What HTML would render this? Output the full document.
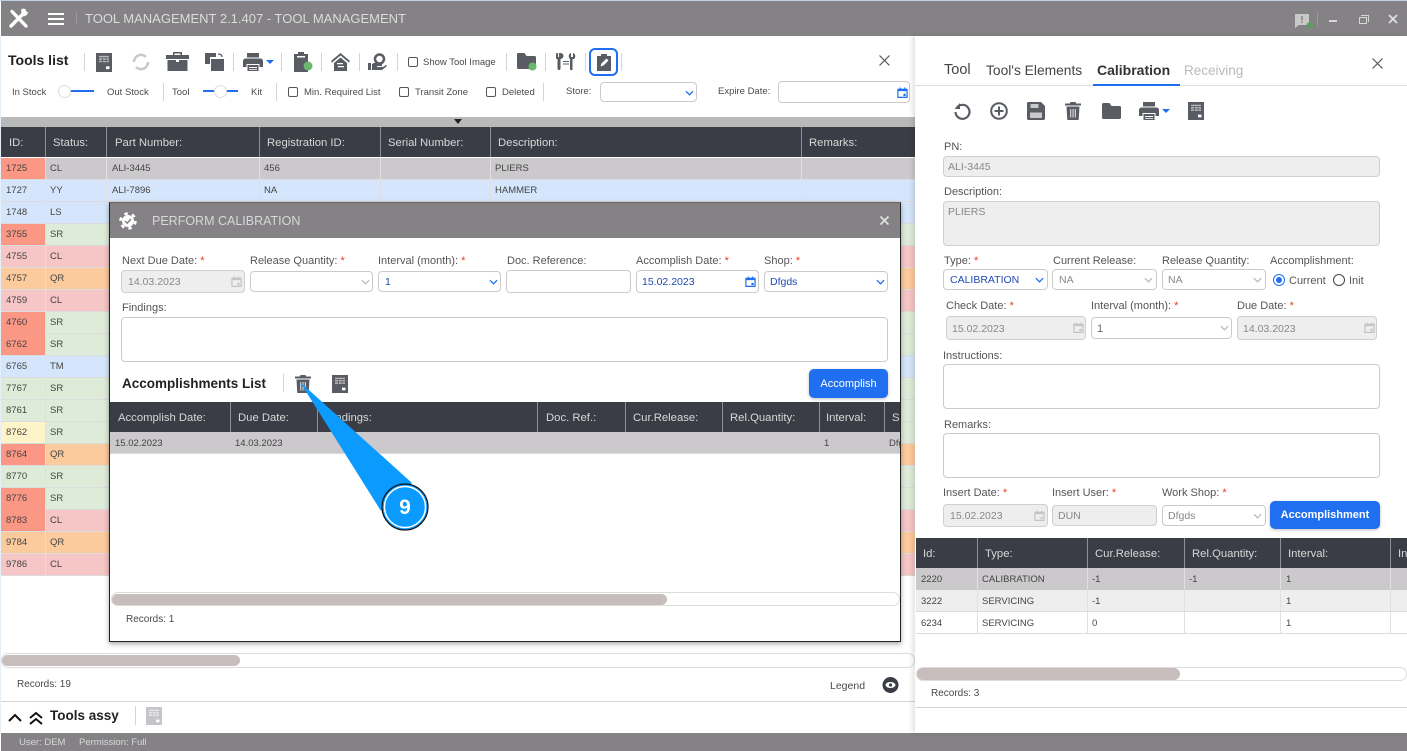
<!DOCTYPE html>
<html><head><meta charset="utf-8"><style>
html,body{margin:0;padding:0;width:1407px;height:751px;overflow:hidden;background:#fff;font-family:"Liberation Sans",sans-serif;color:#444}
div,svg{position:absolute;box-sizing:border-box}
.t{white-space:nowrap;line-height:14px;height:14px;font-size:11px;color:#4a4a4a;margin-top:1px}
.h{white-space:nowrap;line-height:14px;height:14px;font-size:11.3px;color:#d8d8d8;margin-top:1px}
.c{white-space:nowrap;line-height:14px;height:14px;font-size:9.5px;color:#444;margin-top:1px}
.l{white-space:nowrap;line-height:14px;height:14px;font-size:11px;color:#555;margin-top:1px}
.r{color:#f03a17}
.s{background:#d5d3d3;width:1px}
.i{border:1px solid #cfcaca;border-radius:4px;background:#fff}
.d{border:1px solid #d2cece;border-radius:4px;background:#eee}
.v{white-space:nowrap;line-height:14px;height:14px;font-size:10.5px;color:#1f4bb8;margin-top:1px}
.g{white-space:nowrap;line-height:14px;height:14px;font-size:10.5px;color:#888;margin-top:1px}
.cb{width:10px;height:10px;border:1.3px solid #555;border-radius:2px;background:#fff}
.hd{background:#3a3d45;height:30px}
.row{left:0;height:22px;border-bottom:1px solid #dcdcdc}
</style></head><body>
<svg width="0" height="0" style="position:absolute"><defs>
<symbol id="xl" viewBox="0 0 16 20" preserveAspectRatio="none"><path fill="#5a5c63" d="M0 0h16v20H0z"/><path fill="#b9b9bd" d="M3 3h10v1.600H3zM3 5.600h3v1.600H3zM6.800 5.600h3v1.600h-3zM10.400 5.600H13v1.600h-2.600zM3 8.200h3v1.600H3zM6.800 8.200h3v1.600h-3zM10.400 8.200H13v1.600h-2.600z"/><path fill="#fff" d="M10 14h3.500v3H10z"/></symbol>
<symbol id="tr" viewBox="0 0 16 18"><path fill="#5a5c63" d="M5.500 0h5l.7 1.500H16v2H0v-2h4.800zM1.500 4.500h13l-.8 13.500H2.300z"/><path fill="#c9c9cc" d="M5 7h1.300v8.500H5zM7.400 7h1.300v8.500H7.400zM9.700 7H11v8.500H9.700z"/></symbol>
<symbol id="pr" viewBox="0 0 20 18"><path fill="#5a5c63" d="M4 0h12v4.500H4zM2.500 5.500h15A2.500 2.500 0 0 1 20 8v6h-3.500v-3h-13v3H0V8a2.500 2.500 0 0 1 2.500-2.500z"/><path fill="#5a5c63" d="M4.500 12h11v6h-11z"/><path fill="#fff" d="M6 14h8v1H6zM6 16h8v.8H6z"/></symbol>
<symbol id="fo" viewBox="0 0 19 16"><path fill="#5a5c63" d="M1.500 0h6l2 3H17.500A1.500 1.500 0 0 1 19 4.500v10a1.500 1.500 0 0 1-1.500 1.500h-16A1.500 1.500 0 0 1 0 14.500v-13A1.500 1.500 0 0 1 1.500 0z"/></symbol>
<symbol id="ca" viewBox="0 0 12 12"><path fill="none" stroke="currentColor" stroke-width="1.300" d="M1 2.500h10v8.800H1z"/><path fill="currentColor" d="M1 2h10v2.500H1zM3 .5h1.200V3H3zM7.800.5H9V3H7.800zM7 7.500h2.500V10H7z"/></symbol>
<symbol id="ch" viewBox="0 0 10 6"><path fill="none" stroke="currentColor" stroke-width="1.400" d="M1 1l4 4 4-4"/></symbol>
</defs></svg>

<!-- top bar -->
<div style="left:0;top:0;width:1407px;height:1px;background:#bcd3ea"></div>
<div style="left:1px;top:1px;width:1406px;height:35px;background:#848285"></div>
<svg style="left:8px;top:8px" width="21" height="21" viewBox="0 0 21 21"><path fill="none" stroke="#fff" stroke-width="3.400" stroke-linecap="round" d="M3 18L17 4M4 3.500L18 18"/><path fill="#fff" d="M13 1.500a4.500 4.500 0 0 1 5 0L15.500 4.500l1.500 1.500 3-2.500a4.500 4.500 0 0 1-6 4.500z"/></svg>
<div style="left:48px;top:13px;width:16px;height:2px;background:#fff"></div>
<div style="left:48px;top:18px;width:16px;height:2px;background:#fff"></div>
<div style="left:48px;top:23px;width:16px;height:2px;background:#fff"></div>
<div style="left:76px;top:12px;width:1px;height:13px;background:#9a989b"></div>
<div style="left:85px;top:11px;font-size:13px;line-height:16px;color:#dcdcdc;white-space:nowrap">TOOL MANAGEMENT 2.1.407 - TOOL MANAGEMENT</div>
<svg style="left:1294px;top:13px" width="20" height="17" viewBox="0 0 20 17"><path fill="#c9c9c9" d="M1 1h14v11H5l-4 3z"/><path fill="#848285" d="M7.200 3h1.500v4.500H7.200zM7.200 8.500h1.500V10H7.200z"/><circle cx="16" cy="12.500" r="3.500" fill="#5f9a63"/></svg>
<div style="left:1317px;top:12px;width:1px;height:14px;background:#9a989b"></div>
<div style="left:1329px;top:20px;width:8px;height:2px;background:#d8d8d8"></div>
<div style="left:1359px;top:17px;width:8px;height:7px;border:1px solid #d8d8d8"></div>
<div style="left:1361px;top:15px;width:8px;height:7px;border-top:1px solid #d8d8d8;border-right:1px solid #d8d8d8"></div>
<svg style="left:1388px;top:14px" width="10" height="10" viewBox="0 0 10 10"><path stroke="#e0e0e0" stroke-width="1.800" d="M1 1l8 8M9 1l-8 8"/></svg>

<!-- left toolbar -->
<div style="left:0;top:36px;width:1px;height:697px;background:#e6eef7"></div>
<div style="left:8px;top:52px;font-size:14px;font-weight:bold;line-height:16px;color:#222;white-space:nowrap">Tools list</div>
<div class="s" style="left:84px;top:53px;height:18px"></div>
<svg style="left:96px;top:53px" width="16" height="19"><use href="#xl"/></svg>
<svg style="left:131px;top:52px" width="20" height="20" viewBox="0 0 20 20"><path fill="none" stroke="#c9c9c9" stroke-width="2.600" d="M3 10a7 7 0 0 1 12-5M17 10a7 7 0 0 1-12 5"/></svg>
<svg style="left:166px;top:52px" width="23" height="19" viewBox="0 0 23 19"><path fill="#5a5c63" d="M7 0h9v3h-1.500V1.500h-6V3H7zM0 3h23v4H0zM1.500 8H10v2h3V8h8.500v11h-20z"/></svg>
<svg style="left:205px;top:52px" width="20" height="19" viewBox="0 0 20 19"><path fill="#5a5c63" d="M0 1h11v4H5v7H0zM6 7h13v12H6z"/><path fill="none" stroke="#5a5c63" stroke-width="1.300" d="M13 2c3 0 4 1 4 3"/></svg>
<div class="s" style="left:233px;top:53px;height:18px"></div>
<svg style="left:243px;top:53px" width="20" height="18"><use href="#pr"/></svg>
<div style="left:266px;top:60px;width:0;height:0;border:4px solid transparent;border-top:4px solid #1f6ff0"></div>
<div class="s" style="left:281px;top:53px;height:18px"></div>
<svg style="left:293px;top:52px" width="20" height="20" viewBox="0 0 20 20"><path fill="#5a5c63" d="M1 2h4V0h6v2h4v18H1z"/><path fill="#fff" d="M4 4h8v1.500H4z"/><circle cx="15" cy="14" r="4.500" fill="#69b86e"/></svg>
<div class="s" style="left:321px;top:53px;height:18px"></div>
<svg style="left:331px;top:53px" width="19" height="18" viewBox="0 0 19 18"><path fill="#5a5c63" d="M9.500 0L19 8l-1 1.500-8.500-7-8.500 7L0 8zM9.500 4.500L16 10v8H3v-8z"/><path fill="#fff" d="M6 10h6v1.200H6zM7 13h6v1.200H7z"/></svg>
<div class="s" style="left:359px;top:53px;height:18px"></div>
<svg style="left:368px;top:53px" width="19" height="18" viewBox="0 0 19 18"><circle cx="11.500" cy="6" r="4.500" fill="none" stroke="#5a5c63" stroke-width="2.500"/><path fill="#5a5c63" d="M0 10h3v7H0zM4 11c3-2 5-1 7 0h3v2H9v1h6l3-2 1 1-5 4H4z"/></svg>
<div class="s" style="left:397px;top:53px;height:18px"></div>
<div class="cb" style="left:408px;top:57px"></div>
<div class="t" style="left:423px;top:55px;font-size:9.500px">Show Tool Image</div>
<div class="s" style="left:506px;top:53px;height:18px"></div>
<svg style="left:517px;top:53px" width="21" height="18"><use href="#fo" width="19" height="16"/><circle cx="15.500" cy="13.500" r="4" fill="#69b86e"/></svg>
<div class="s" style="left:545px;top:53px;height:18px"></div>
<svg style="left:556px;top:53px" width="20" height="18" viewBox="0 0 20 18"><path fill="#5a5c63" d="M2 0v4h1V0h1.500a3 3 0 0 1 0 6v9.500a1.500 1.500 0 1 1-3 0V6a3 3 0 0 1 .5-6zM15 0v4h2V0a3.500 3.500 0 0 1 1 6h-1.500v10a1 1 0 1 1-2.500 0V6a3.500 3.500 0 0 1 1-6zM7 8h6v1H7zM7 10.500h6v1H7z"/></svg>
<div class="s" style="left:585px;top:53px;height:18px"></div>
<div style="left:589px;top:48px;width:29px;height:28px;border:2px solid #1f6ff0;border-radius:6px"></div>
<svg style="left:597px;top:54px" width="14" height="17" viewBox="0 0 14 17"><path fill="#5a5c63" d="M0 2h4V0h6v2h4v15H0z"/><path fill="#fff" d="M3.500 12.500l1-3 5-5 2 2-5 5z"/></svg>
<div class="s" style="left:621px;top:53px;height:18px"></div>
<svg style="left:879px;top:55px" width="11" height="11" viewBox="0 0 11 11"><path stroke="#555" stroke-width="1.200" d="M.5.5l10 10M10.500.5l-10 10"/></svg>

<div class="t" style="left:12px;top:85px;font-size:9.500px">In Stock</div>
<div style="left:65px;top:90px;width:29px;height:2px;background:#1f6ff0"></div>
<div style="left:58px;top:85px;width:13px;height:13px;background:#fff;border:1px solid #ddd;border-radius:50%"></div>
<div class="t" style="left:107px;top:85px;font-size:9.500px">Out Stock</div>
<div class="s" style="left:163px;top:83px;height:18px"></div>
<div class="t" style="left:172px;top:85px;font-size:9.500px">Tool</div>
<div style="left:203px;top:90px;width:35px;height:2px;background:#1f6ff0"></div>
<div style="left:214px;top:85px;width:13px;height:13px;background:#fff;border:1px solid #ddd;border-radius:50%"></div>
<div class="t" style="left:251px;top:85px;font-size:9.500px">Kit</div>
<div class="s" style="left:276px;top:83px;height:18px"></div>
<div class="cb" style="left:288px;top:87px"></div>
<div class="t" style="left:304px;top:85px;font-size:9.500px">Min. Required List</div>
<div class="cb" style="left:399px;top:87px"></div>
<div class="t" style="left:415px;top:85px;font-size:9.500px">Transit Zone</div>
<div class="cb" style="left:486px;top:87px"></div>
<div class="t" style="left:502px;top:85px;font-size:9.500px">Deleted</div>
<div class="s" style="left:543px;top:83px;height:18px"></div>
<div class="t" style="left:566px;top:84px;font-size:9.500px">Store:</div>
<div class="i" style="left:600px;top:82px;width:97px;height:20px"></div>
<svg style="left:685px;top:90px;color:#1f6ff0" width="9" height="6"><use href="#ch"/></svg>
<div class="t" style="left:718px;top:84px;font-size:9.500px">Expire Date:</div>
<div class="i" style="left:778px;top:81px;width:132px;height:22px"></div>
<svg style="left:897px;top:87px;color:#1f6ff0" width="11" height="11"><use href="#ca"/></svg>

<!-- main table -->
<div style="left:1px;top:117px;width:914px;height:10px;background:#b9b9b9"></div>
<div style="left:454px;top:119px;width:0;height:0;border:4px solid transparent;border-top:5px solid #222"></div>
<div class="hd" style="left:1px;top:127px;width:914px"></div>
<div class="h" style="left:9px;top:135px">ID:</div>
<div class="h" style="left:53px;top:135px">Status:</div>
<div class="h" style="left:115px;top:135px">Part Number:</div>
<div class="h" style="left:267px;top:135px">Registration ID:</div>
<div class="h" style="left:388px;top:135px">Serial Number:</div>
<div class="h" style="left:498px;top:135px">Description:</div>
<div class="h" style="left:809px;top:135px">Remarks:</div>
<div style="left:45px;top:127px;width:1px;height:30px;background:#8f9095"></div>
<div style="left:106px;top:127px;width:1px;height:30px;background:#8f9095"></div>
<div style="left:259px;top:127px;width:1px;height:30px;background:#8f9095"></div>
<div style="left:380px;top:127px;width:1px;height:30px;background:#8f9095"></div>
<div style="left:490px;top:127px;width:1px;height:30px;background:#8f9095"></div>
<div style="left:801px;top:127px;width:1px;height:30px;background:#8f9095"></div>

<div class="row" style="left:1px;top:158px;width:914px;background:#cbc9cb"></div>
<div class="row" style="left:1px;top:180px;width:914px;background:#d5e5fb"></div>
<div class="row" style="left:1px;top:202px;width:914px;background:#d5e5fb"></div>
<div class="row" style="left:1px;top:224px;width:914px;background:#deebd9"></div>
<div class="row" style="left:1px;top:246px;width:914px;background:#f6c6c6"></div>
<div class="row" style="left:1px;top:268px;width:914px;background:#fccb9d"></div>
<div class="row" style="left:1px;top:290px;width:914px;background:#f6c6c6"></div>
<div class="row" style="left:1px;top:312px;width:914px;background:#deebd9"></div>
<div class="row" style="left:1px;top:334px;width:914px;background:#deebd9"></div>
<div class="row" style="left:1px;top:356px;width:914px;background:#d5e5fb"></div>
<div class="row" style="left:1px;top:378px;width:914px;background:#deebd9"></div>
<div class="row" style="left:1px;top:400px;width:914px;background:#deebd9"></div>
<div class="row" style="left:1px;top:422px;width:914px;background:#deebd9"></div>
<div class="row" style="left:1px;top:444px;width:914px;background:#fccb9d"></div>
<div class="row" style="left:1px;top:466px;width:914px;background:#deebd9"></div>
<div class="row" style="left:1px;top:488px;width:914px;background:#deebd9"></div>
<div class="row" style="left:1px;top:510px;width:914px;background:#f6c6c6"></div>
<div class="row" style="left:1px;top:532px;width:914px;background:#fccb9d"></div>
<div class="row" style="left:1px;top:554px;width:914px;background:#f6c6c6"></div>
<!-- id cells -->
<div style="left:1px;top:158px;width:44px;height:21px;background:#fb9785"></div>
<div style="left:1px;top:224px;width:44px;height:21px;background:#fb9785"></div>
<div style="left:1px;top:312px;width:44px;height:43px;background:#fb9785"></div>
<div style="left:1px;top:422px;width:44px;height:21px;background:#fff3c9"></div>
<div style="left:1px;top:444px;width:44px;height:21px;background:#fb9785"></div>
<div style="left:1px;top:488px;width:44px;height:43px;background:#fb9785"></div>
<div style="left:45px;top:158px;width:1px;height:417px;background:#e0e0e0"></div>
<div style="left:106px;top:158px;width:1px;height:45px;background:#e0e0e0"></div>
<div style="left:259px;top:158px;width:1px;height:45px;background:#e0e0e0"></div>
<div style="left:380px;top:158px;width:1px;height:45px;background:#e0e0e0"></div>
<div style="left:490px;top:158px;width:1px;height:45px;background:#e0e0e0"></div>
<div style="left:801px;top:158px;width:1px;height:45px;background:#e0e0e0"></div>
<div class="c" style="left:6px;top:161px">1725</div><div class="c" style="left:50px;top:161px">CL</div><div class="c" style="left:112px;top:161px">ALI-3445</div><div class="c" style="left:264px;top:161px">456</div><div class="c" style="left:495px;top:161px">PLIERS</div>
<div class="c" style="left:6px;top:183px">1727</div><div class="c" style="left:50px;top:183px">YY</div><div class="c" style="left:112px;top:183px">ALI-7896</div><div class="c" style="left:264px;top:183px">NA</div><div class="c" style="left:495px;top:183px">HAMMER</div>
<div class="c" style="left:6px;top:205px">1748</div><div class="c" style="left:50px;top:205px">LS</div>
<div class="c" style="left:6px;top:227px">3755</div><div class="c" style="left:50px;top:227px">SR</div>
<div class="c" style="left:6px;top:249px">4755</div><div class="c" style="left:50px;top:249px">CL</div>
<div class="c" style="left:6px;top:271px">4757</div><div class="c" style="left:50px;top:271px">QR</div>
<div class="c" style="left:6px;top:293px">4759</div><div class="c" style="left:50px;top:293px">CL</div>
<div class="c" style="left:6px;top:315px">4760</div><div class="c" style="left:50px;top:315px">SR</div>
<div class="c" style="left:6px;top:337px">6762</div><div class="c" style="left:50px;top:337px">SR</div>
<div class="c" style="left:6px;top:359px">6765</div><div class="c" style="left:50px;top:359px">TM</div>
<div class="c" style="left:6px;top:381px">7767</div><div class="c" style="left:50px;top:381px">SR</div>
<div class="c" style="left:6px;top:403px">8761</div><div class="c" style="left:50px;top:403px">SR</div>
<div class="c" style="left:6px;top:425px">8762</div><div class="c" style="left:50px;top:425px">SR</div>
<div class="c" style="left:6px;top:447px">8764</div><div class="c" style="left:50px;top:447px">QR</div>
<div class="c" style="left:6px;top:469px">8770</div><div class="c" style="left:50px;top:469px">SR</div>
<div class="c" style="left:6px;top:491px">8776</div><div class="c" style="left:50px;top:491px">SR</div>
<div class="c" style="left:6px;top:513px">8783</div><div class="c" style="left:50px;top:513px">CL</div>
<div class="c" style="left:6px;top:535px">9784</div><div class="c" style="left:50px;top:535px">QR</div>
<div class="c" style="left:6px;top:557px">9786</div><div class="c" style="left:50px;top:557px">CL</div>

<!-- bottom left -->
<div style="left:1px;top:653px;width:914px;height:15px;border:1px solid #dcdcdc;border-radius:7px;background:#fff"></div>
<div style="left:2px;top:655px;width:238px;height:11px;border-radius:6px;background:#c6bdbc"></div>
<div class="t" style="left:17px;top:677px;font-size:10px">Records: 19</div>
<div class="t" style="left:830px;top:678px;font-size:10.500px">Legend</div>
<svg style="left:882px;top:677px" width="17" height="16" viewBox="0 0 17 16"><circle cx="8.500" cy="8" r="8" fill="#3a3d45"/><ellipse cx="8.500" cy="8" rx="5" ry="3" fill="#fff"/><circle cx="8.500" cy="8" r="1.600" fill="#3a3d45"/></svg>
<div style="left:1px;top:701px;width:914px;height:1px;background:#d4d4d4"></div>
<svg style="left:8px;top:711px" width="36" height="15" viewBox="0 0 36 15"><path fill="none" stroke="#111" stroke-width="2" d="M1 10l6-6 6 6M22 7l6-5 6 5M22 13l6-5 6 5"/></svg>
<div style="left:50px;top:708px;font-size:13.500px;font-weight:bold;line-height:16px;color:#222;white-space:nowrap">Tools assy</div>
<div class="s" style="left:135px;top:706px;height:19px"></div>
<svg style="left:146px;top:707px;opacity:.35" width="16" height="18"><use href="#xl"/></svg>
<div style="left:1px;top:733px;width:1406px;height:18px;background:#848285"></div>
<div style="left:19px;top:737px;font-size:9.500px;line-height:12px;color:#d8d8d8;white-space:nowrap">User: DEM</div>
<div style="left:79px;top:737px;font-size:9.500px;line-height:12px;color:#d8d8d8;white-space:nowrap">Permission: Full</div>

<!-- right panel -->
<div style="left:915px;top:36px;width:492px;height:697px;background:#fff;box-shadow:-3px 0 4px rgba(0,0,0,.1)"></div>
<div style="left:944px;top:62px;font-size:14.500px;line-height:17px;color:#444;white-space:nowrap">Tool</div>
<div style="left:986px;top:62px;font-size:13.800px;line-height:17px;color:#444;white-space:nowrap">Tool's Elements</div>
<div style="left:1097px;top:62px;font-size:14px;line-height:17px;font-weight:bold;color:#333;white-space:nowrap">Calibration</div>
<div style="left:1184px;top:62px;font-size:13.500px;line-height:17px;color:#bbb;white-space:nowrap">Receiving</div>
<div style="left:915px;top:85px;width:492px;height:1px;background:#e0dcdc"></div>
<div style="left:1093px;top:84px;width:87px;height:2px;background:#1f6ff0"></div>
<svg style="left:1372px;top:58px" width="11" height="11" viewBox="0 0 11 11"><path stroke="#555" stroke-width="1.200" d="M.5.5l10 10M10.500.5l-10 10"/></svg>
<svg style="left:953px;top:102px" width="18" height="19" viewBox="0 0 18 19"><path fill="none" stroke="#5a5c63" stroke-width="2.200" d="M4 5.500a7 7 0 1 1-1.500 4.500"/><path fill="#5a5c63" d="M7 1v6H1.500z"/></svg>
<svg style="left:990px;top:102px" width="18" height="18" viewBox="0 0 18 18"><circle cx="9" cy="9" r="7.800" fill="none" stroke="#5a5c63" stroke-width="2"/><path fill="#5a5c63" d="M8 4.500h2V8h3.500v2H10v3.500H8V10H4.500V8H8z"/></svg>
<svg style="left:1027px;top:102px" width="18" height="18" viewBox="0 0 18 18"><path fill="#5a5c63" d="M1.500 0H14l4 4v12.500a1.500 1.500 0 0 1-1.500 1.500h-15A1.500 1.500 0 0 1 0 16.500v-15A1.500 1.500 0 0 1 1.500 0z"/><path fill="#c9c9cc" d="M3.500 2h8v4h-8zM3 10.500h12V16H3z"/></svg>
<svg style="left:1065px;top:102px" width="16" height="18"><use href="#tr"/></svg>
<svg style="left:1102px;top:103px" width="19" height="16"><use href="#fo"/></svg>
<svg style="left:1139px;top:102px" width="20" height="18"><use href="#pr"/></svg>
<div style="left:1162px;top:109px;width:0;height:0;border:4px solid transparent;border-top:4px solid #1f6ff0"></div>
<svg style="left:1188px;top:102px" width="16" height="18"><use href="#xl"/></svg>

<div class="l" style="left:944px;top:139px">PN:</div>
<div class="d" style="left:943px;top:156px;width:437px;height:21px"></div>
<div class="g" style="left:948px;top:159px">ALI-3445</div>
<div class="l" style="left:944px;top:184px">Description:</div>
<div class="d" style="left:943px;top:201px;width:437px;height:45px"></div>
<div class="g" style="left:948px;top:204px">PLIERS</div>

<div class="l" style="left:944px;top:253px">Type: <span class="r">*</span></div>
<div class="l" style="left:1053px;top:253px">Current Release:</div>
<div class="l" style="left:1162px;top:253px">Release Quantity:</div>
<div class="l" style="left:1270px;top:253px">Accomplishment:</div>
<div class="i" style="left:943px;top:269px;width:105px;height:21px"></div>
<div class="v" style="left:950px;top:272px">CALIBRATION</div>
<svg style="left:1035px;top:277px;color:#1f6ff0" width="9" height="6"><use href="#ch"/></svg>
<div class="i" style="left:1052px;top:269px;width:105px;height:21px"></div>
<div class="g" style="left:1059px;top:272px">NA</div>
<svg style="left:1144px;top:277px;color:#bbb" width="9" height="6"><use href="#ch"/></svg>
<div class="i" style="left:1162px;top:269px;width:104px;height:21px"></div>
<div class="g" style="left:1168px;top:272px">NA</div>
<svg style="left:1253px;top:277px;color:#bbb" width="9" height="6"><use href="#ch"/></svg>
<div style="left:1273px;top:274px;width:12px;height:12px;border:1.200px solid #1f6ff0;border-radius:50%"></div>
<div style="left:1276px;top:277px;width:6px;height:6px;background:#1f6ff0;border-radius:50%"></div>
<div class="l" style="left:1289px;top:273px">Current</div>
<div style="left:1333px;top:274px;width:12px;height:12px;border:1.200px solid #444;border-radius:50%"></div>
<div class="l" style="left:1349px;top:273px">Init</div>

<div class="l" style="left:946px;top:298px">Check Date: <span class="r">*</span></div>
<div class="l" style="left:1091px;top:298px">Interval (month): <span class="r">*</span></div>
<div class="l" style="left:1237px;top:298px">Due Date: <span class="r">*</span></div>
<div class="d" style="left:946px;top:316px;width:140px;height:24px"></div>
<div class="g" style="left:952px;top:321px">15.02.2023</div>
<svg style="left:1073px;top:322px;color:#c4c4c4" width="11" height="11"><use href="#ca"/></svg>
<div class="i" style="left:1091px;top:317px;width:141px;height:22px"></div>
<div class="l" style="left:1097px;top:321px;color:#666">1</div>
<svg style="left:1220px;top:325px;color:#bbb" width="9" height="6"><use href="#ch"/></svg>
<div class="d" style="left:1237px;top:316px;width:140px;height:24px"></div>
<div class="g" style="left:1243px;top:321px">14.03.2023</div>
<svg style="left:1364px;top:322px;color:#c4c4c4" width="11" height="11"><use href="#ca"/></svg>

<div class="l" style="left:943px;top:348px">Instructions:</div>
<div class="i" style="left:943px;top:364px;width:437px;height:45px"></div>
<div class="l" style="left:944px;top:417px">Remarks:</div>
<div class="i" style="left:943px;top:433px;width:437px;height:45px"></div>

<div class="l" style="left:943px;top:485px">Insert Date: <span class="r">*</span></div>
<div class="l" style="left:1052px;top:485px">Insert User: <span class="r">*</span></div>
<div class="l" style="left:1162px;top:485px">Work Shop: <span class="r">*</span></div>
<div class="d" style="left:943px;top:504px;width:105px;height:23px"></div>
<div class="g" style="left:950px;top:508px">15.02.2023</div>
<svg style="left:1034px;top:510px;color:#c4c4c4" width="11" height="11"><use href="#ca"/></svg>
<div class="d" style="left:1052px;top:505px;width:105px;height:21px"></div>
<div class="g" style="left:1058px;top:508px">DUN</div>
<div class="i" style="left:1162px;top:505px;width:104px;height:21px"></div>
<div class="g" style="left:1168px;top:508px">Dfgds</div>
<svg style="left:1253px;top:513px;color:#bbb" width="9" height="6"><use href="#ch"/></svg>
<div style="left:1270px;top:501px;width:110px;height:28px;background:#1f6ff0;border-radius:5px;box-shadow:0 1px 3px rgba(0,0,0,.25);color:#fff;font-size:11px;font-weight:bold;line-height:29px;text-align:center">Accomplishment</div>

<div style="left:916px;top:538px;width:491px;height:30px;background:#3a3d45"></div>
<div class="h" style="left:923px;top:546px">Id:</div>
<div class="h" style="left:985px;top:546px">Type:</div>
<div class="h" style="left:1095px;top:546px">Cur.Release:</div>
<div class="h" style="left:1192px;top:546px">Rel.Quantity:</div>
<div class="h" style="left:1288px;top:546px">Interval:</div>
<div class="h" style="left:1398px;top:546px">In</div>
<div style="left:977px;top:538px;width:1px;height:30px;background:#8f9095"></div>
<div style="left:1087px;top:538px;width:1px;height:30px;background:#8f9095"></div>
<div style="left:1184px;top:538px;width:1px;height:30px;background:#8f9095"></div>
<div style="left:1280px;top:538px;width:1px;height:30px;background:#8f9095"></div>
<div style="left:1390px;top:538px;width:1px;height:30px;background:#8f9095"></div>
<div style="left:916px;top:568px;width:491px;height:22px;background:#cbc9cb"></div>
<div style="left:916px;top:590px;width:491px;height:22px;background:#eee;border-bottom:1px solid #dcdcdc"></div>
<div style="left:916px;top:612px;width:491px;height:22px;background:#fff;border-bottom:1px solid #dcdcdc"></div>
<div style="left:977px;top:568px;width:1px;height:66px;background:#e0e0e0"></div>
<div style="left:1087px;top:568px;width:1px;height:66px;background:#e0e0e0"></div>
<div style="left:1184px;top:568px;width:1px;height:66px;background:#e0e0e0"></div>
<div style="left:1280px;top:568px;width:1px;height:66px;background:#e0e0e0"></div>
<div style="left:1390px;top:568px;width:1px;height:66px;background:#e0e0e0"></div>
<div class="c" style="left:921px;top:572px">2220</div><div class="c" style="left:982px;top:572px">CALIBRATION</div><div class="c" style="left:1092px;top:572px">-1</div><div class="c" style="left:1189px;top:572px">-1</div><div class="c" style="left:1286px;top:572px">1</div>
<div class="c" style="left:921px;top:594px">3222</div><div class="c" style="left:982px;top:594px">SERVICING</div><div class="c" style="left:1092px;top:594px">-1</div><div class="c" style="left:1286px;top:594px">1</div>
<div class="c" style="left:921px;top:616px">6234</div><div class="c" style="left:982px;top:616px">SERVICING</div><div class="c" style="left:1092px;top:616px">0</div><div class="c" style="left:1286px;top:616px">1</div>
<div style="left:916px;top:667px;width:491px;height:14px;border:1px solid #dcdcdc;border-radius:7px;background:#fff"></div>
<div style="left:917px;top:668px;width:263px;height:12px;border-radius:6px;background:#c6bdbc"></div>
<div class="t" style="left:931px;top:686px;font-size:10px">Records: 3</div>
<div style="left:916px;top:707px;width:491px;height:1px;background:#d4d4d4"></div>

<!-- modal -->
<div style="left:109px;top:202px;width:792px;height:440px;background:#fff;border:1.500px solid #222;border-top-color:#666;box-shadow:0 2px 5px rgba(0,0,0,.35)"></div>
<div style="left:110px;top:203px;width:790px;height:35px;background:#848285"></div>
<svg style="left:119px;top:212px" width="18" height="18" viewBox="0 0 18 18"><circle cx="9" cy="9" r="6" fill="#fff"/><circle cx="9" cy="9" r="7.500" fill="none" stroke="#fff" stroke-width="2.600" stroke-dasharray="3.500 4.350"/><path fill="none" stroke="#848285" stroke-width="1.500" d="M6 9l2.200 2.200L12 7"/></svg>
<div style="left:152px;top:213px;font-size:12.500px;line-height:16px;color:#d8d8d8;white-space:nowrap">PERFORM CALIBRATION</div>
<svg style="left:880px;top:216px" width="9" height="9" viewBox="0 0 9 9"><path stroke="#e0e0e0" stroke-width="1.800" d="M.5.5l8 8M8.500.5l-8 8"/></svg>

<div class="l" style="left:122px;top:253px">Next Due Date: <span class="r">*</span></div>
<div class="l" style="left:250px;top:253px">Release Quantity: <span class="r">*</span></div>
<div class="l" style="left:378px;top:253px">Interval (month): <span class="r">*</span></div>
<div class="l" style="left:507px;top:253px">Doc. Reference:</div>
<div class="l" style="left:636px;top:253px">Accomplish Date: <span class="r">*</span></div>
<div class="l" style="left:764px;top:253px">Shop: <span class="r">*</span></div>
<div class="d" style="left:121px;top:270px;width:124px;height:23px"></div>
<div class="g" style="left:128px;top:274px">14.03.2023</div>
<svg style="left:231px;top:276px;color:#c4c4c4" width="11" height="11"><use href="#ca"/></svg>
<div class="i" style="left:250px;top:271px;width:123px;height:21px"></div>
<svg style="left:361px;top:279px;color:#bbb" width="9" height="6"><use href="#ch"/></svg>
<div class="i" style="left:378px;top:271px;width:123px;height:21px"></div>
<div class="v" style="left:385px;top:274px">1</div>
<svg style="left:489px;top:279px;color:#1f6ff0" width="9" height="6"><use href="#ch"/></svg>
<div class="i" style="left:506px;top:270px;width:125px;height:23px"></div>
<div class="i" style="left:636px;top:270px;width:123px;height:23px"></div>
<div class="v" style="left:642px;top:274px">15.02.2023</div>
<svg style="left:745px;top:276px;color:#1f6ff0" width="11" height="11"><use href="#ca"/></svg>
<div class="i" style="left:764px;top:271px;width:124px;height:21px"></div>
<div class="v" style="left:770px;top:274px">Dfgds</div>
<svg style="left:876px;top:279px;color:#1f6ff0" width="9" height="6"><use href="#ch"/></svg>
<div class="l" style="left:122px;top:300px">Findings:</div>
<div class="i" style="left:121px;top:317px;width:767px;height:45px"></div>

<div style="left:122px;top:376px;font-size:13.500px;font-weight:bold;line-height:16px;color:#222;white-space:nowrap">Accomplishments List</div>
<div class="s" style="left:283px;top:374px;height:18px"></div>
<svg style="left:295px;top:375px" width="16" height="18"><use href="#tr"/></svg>
<svg style="left:332px;top:375px" width="16" height="18"><use href="#xl"/></svg>
<div style="left:809px;top:369px;width:79px;height:29px;background:#1f6ff0;border-radius:5px;box-shadow:0 1px 3px rgba(0,0,0,.25);color:#fff;font-size:11px;line-height:31px;text-align:center">Accomplish</div>

<div style="left:110px;top:402px;width:790px;height:30px;background:#3a3d45"></div>
<div class="h" style="left:118px;top:410px">Accomplish Date:</div>
<div class="h" style="left:238px;top:410px">Due Date:</div>
<div class="h" style="left:326px;top:410px">Findings:</div>
<div class="h" style="left:546px;top:410px">Doc. Ref.:</div>
<div class="h" style="left:633px;top:410px">Cur.Release:</div>
<div class="h" style="left:730px;top:410px">Rel.Quantity:</div>
<div class="h" style="left:826px;top:410px">Interval:</div>
<div class="h" style="left:892px;top:410px;width:8px;overflow:hidden">Shop:</div>
<div style="left:230px;top:402px;width:1px;height:30px;background:#8f9095"></div>
<div style="left:317px;top:402px;width:1px;height:30px;background:#8f9095"></div>
<div style="left:537px;top:402px;width:1px;height:30px;background:#8f9095"></div>
<div style="left:625px;top:402px;width:1px;height:30px;background:#8f9095"></div>
<div style="left:722px;top:402px;width:1px;height:30px;background:#8f9095"></div>
<div style="left:819px;top:402px;width:1px;height:30px;background:#8f9095"></div>
<div style="left:884px;top:402px;width:1px;height:30px;background:#8f9095"></div>
<div style="left:110px;top:432px;width:790px;height:22px;background:#cbc9cb;border-bottom:1px solid #dcdcdc"></div>
<div class="c" style="left:115px;top:436px">15.02.2023</div>
<div class="c" style="left:235px;top:436px">14.03.2023</div>
<div class="c" style="left:824px;top:436px">1</div>
<div class="c" style="left:889px;top:436px;width:11px;overflow:hidden">Dfgds</div>
<div style="left:111px;top:592px;width:789px;height:14px;border:1px solid #dcdcdc;border-radius:7px;background:#fff"></div>
<div style="left:112px;top:594px;width:555px;height:11px;border-radius:6px;background:#c6bdbc"></div>
<div class="t" style="left:126px;top:612px;font-size:10px">Records: 1</div>

<!-- callout -->
<svg style="left:290px;top:370px" width="145" height="165" viewBox="290 370 145 165"><path fill="#0b9bff" d="M300 382L412 483 381 511z"/><circle cx="405" cy="507" r="23" fill="#0b9bff" stroke="#111" stroke-width="1.200"/><circle cx="405" cy="507" r="20.500" fill="none" stroke="#fff" stroke-width="1.500"/><text x="405" y="514" text-anchor="middle" font-family="Liberation Sans,sans-serif" font-weight="bold" font-size="21" fill="#fff">9</text></svg>
</body></html>
